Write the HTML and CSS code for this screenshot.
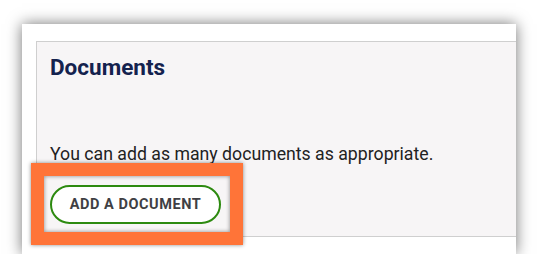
FILE: index.html
```html
<!DOCTYPE html>
<html>
<head>
<meta charset="utf-8">
<link rel="stylesheet" href="styles.css">
</head>
<body>
<div class="card">
  <section class="panel">
    <h2 class="title">Documents</h2>
    <p class="note">You can add as many documents as appropriate.</p>
    <div class="actions">
      <span class="highlight">
        <button class="btn" type="button">ADD A DOCUMENT</button>
      </span>
    </div>
  </section>
</div>
</body>
</html>
```
FILE: styles.css
```css
html, body {
  margin: 0;
  background: #ffffff;
}
body {
  padding: 24px 22px 0 22px;
  font-family: Roboto, "Liberation Sans", sans-serif;
}
.card {
  width: 494px;
  height: 230px;
  box-sizing: border-box;
  background: #ffffff;
  box-shadow: 0 0 14px rgba(0, 0, 0, 0.55);
  padding: 17px 0 17px 14px;
}
.panel {
  height: 100%;
  box-sizing: border-box;
  background: #f7f5f6;
  border: 1px solid #cfcfcf;
  border-right: none;
  padding: 12px 0 0 13px;
  display: flex;
  flex-direction: column;
}
.title {
  margin: 0;
  font-size: 22.5px;
  line-height: 26px;
  font-weight: 700;
  color: #14224e;
}
.note {
  margin: 62px 0 0 0;
  font-size: 17.7px;
  line-height: 24px;
  color: #222222;
}
.actions {
  margin-top: 19px;
  display: flex;
}
.highlight {
  position: relative;
  display: inline-flex;
}
.highlight::after {
  content: "";
  position: absolute;
  left: -19px;
  top: -22px;
  right: -22px;
  bottom: -21px;
  border: 13px solid #ff7438;
  box-shadow: 0 0 4px rgba(0, 0, 0, 0.45), inset 0 0 4px rgba(0, 0, 0, 0.45);
  pointer-events: none;
}
.btn {
  width: 171px;
  height: 39px;
  box-sizing: border-box;
  border: 2px solid #2d8a10;
  border-radius: 20px;
  background: #ffffff;
  font-family: Roboto, "Liberation Sans", sans-serif;
  font-size: 14.5px;
  font-weight: 700;
  letter-spacing: 0.55px;
  color: #3f3f44;
  padding: 0;
}
```
